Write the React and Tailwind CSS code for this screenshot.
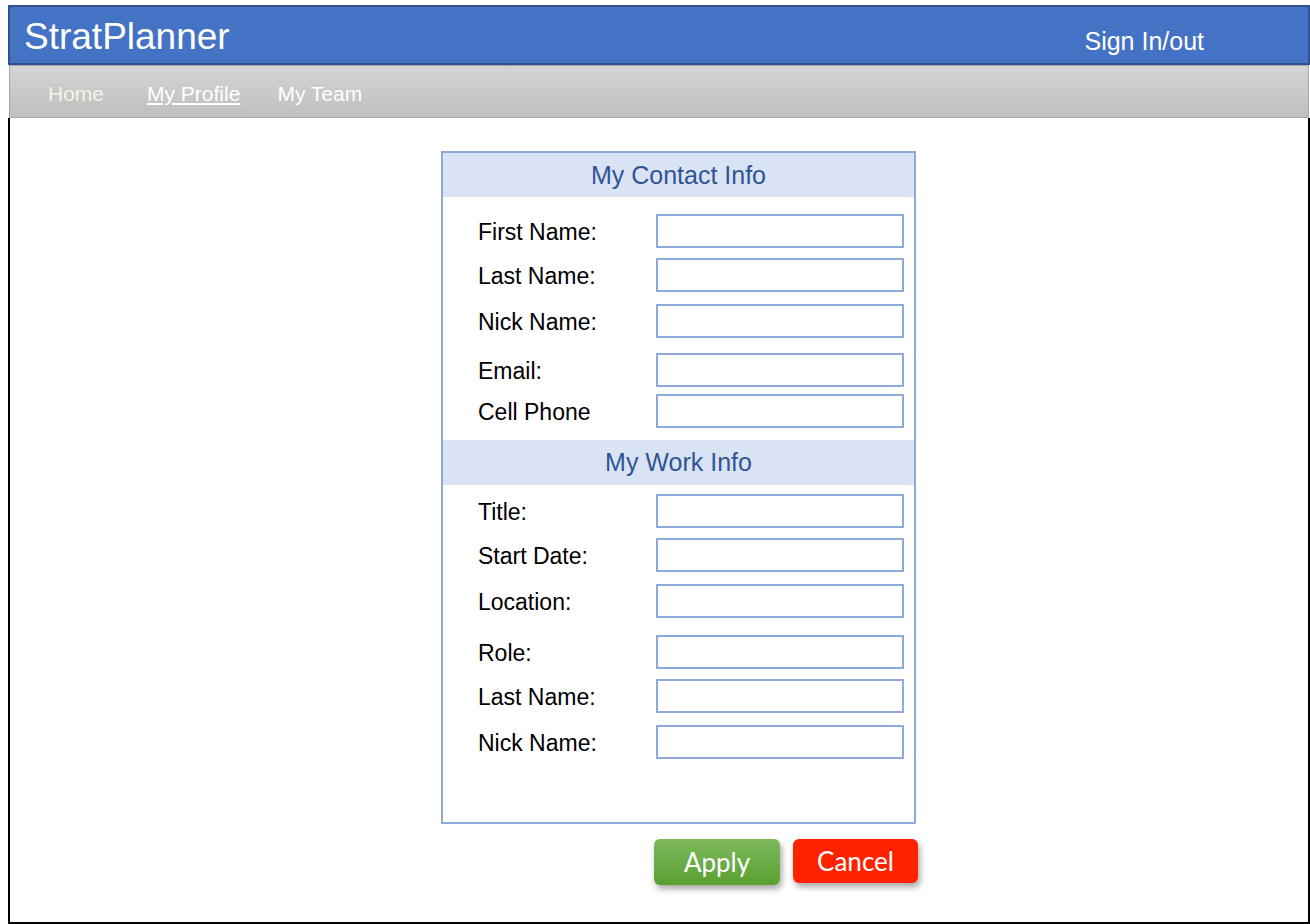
import React from 'react'

const contacto = [
  { label: 'First Name:', mt: 'mt-[17px]' },
  { label: 'Last Name:', mt: 'mt-[10px]' },
  { label: 'Nick Name:', mt: 'mt-[12px]' },
  { label: 'Email:', mt: 'mt-[15px]' },
  { label: 'Cell Phone', mt: 'mt-[7px]' },
]

const trabajo = [
  { label: 'Title:', mt: 'mt-[9px]' },
  { label: 'Start Date:', mt: 'mt-[10px]' },
  { label: 'Location:', mt: 'mt-[12px]' },
  { label: 'Role:', mt: 'mt-[17px]' },
  { label: 'Last Name:', mt: 'mt-[10px]' },
  { label: 'Nick Name:', mt: 'mt-[12px]' },
]

function Fila({ label, mt }) {
  return (
    <div className={`flex items-center h-[34px] ${mt}`}>
      <span className="w-[213px] shrink-0 pl-[35px] pt-[2px] text-[23px] leading-none text-black">{label}</span>
      <input className="w-[248px] h-[34px] border-2 border-[#8EA9DB] bg-white outline-none" />
    </div>
  )
}

function Banda({ children, cls }) {
  return (
    <div className={`bg-[#DAE3F3] flex items-center justify-center pt-[1px] text-[25px] text-[#2F5597] ${cls}`}>
      {children}
    </div>
  )
}

export default function App() {
  return (
    <div className="w-[1310px] h-[924px] bg-white pt-[5px] pl-[8px]" style={{ fontFamily: '"Liberation Sans", Arial, sans-serif' }}>
      <div className="w-[1302px] h-[919px] flex flex-col">
        <header className="h-[60px] bg-[#4472C4] border-2 border-[#2F528F] flex items-center justify-between text-white">
          <span className="pl-[14px] pt-[3px] text-[37px] leading-none">StratPlanner</span>
          <span className="pr-[104px] pt-[12px] text-[25px] leading-none">Sign In/out</span>
        </header>
        <nav className="h-[53px] mx-[1px] bg-gradient-to-b from-[#d4d4d4] to-[#bfbfbf] border border-[#a6a6a6] flex items-center pt-[4px] text-[21px] text-white">
          <span className="ml-[38px] text-[#ecf8e4]">Home</span>
          <span className="ml-[43px] underline underline-offset-2">My Profile</span>
          <span className="ml-[37px]">My Team</span>
        </nav>
        <main className="flex-1 border-x-2 border-b-2 border-black pt-[33px]">
          <div className="ml-[431px] w-[475px] h-[673px] border-2 border-[#8EA9DB]">
            <Banda cls="h-[44px]">My Contact Info</Banda>
            {contacto.map((f, i) => <Fila key={i} {...f} />)}
            <Banda cls="h-[45px] mt-[12px]">My Work Info</Banda>
            {trabajo.map((f, i) => <Fila key={i} {...f} />)}
          </div>
          <div className="ml-[644px] mt-[15px] flex items-start gap-[13px]" style={{ fontFamily: 'Lato, "Open Sans", sans-serif' }}>
            <button className="w-[126px] h-[46px] rounded-[6px] bg-gradient-to-b from-[#7db95c] to-[#5b9f2f] text-white text-[26px] shadow-[2px_4px_6px_rgba(0,0,0,0.35)]">
              Apply
            </button>
            <button className="w-[125px] h-[44px] rounded-[6px] bg-[#FF2200] text-white text-[26px] shadow-[2px_4px_6px_rgba(0,0,0,0.35)]">
              Cancel
            </button>
          </div>
        </main>
      </div>
    </div>
  )
}
